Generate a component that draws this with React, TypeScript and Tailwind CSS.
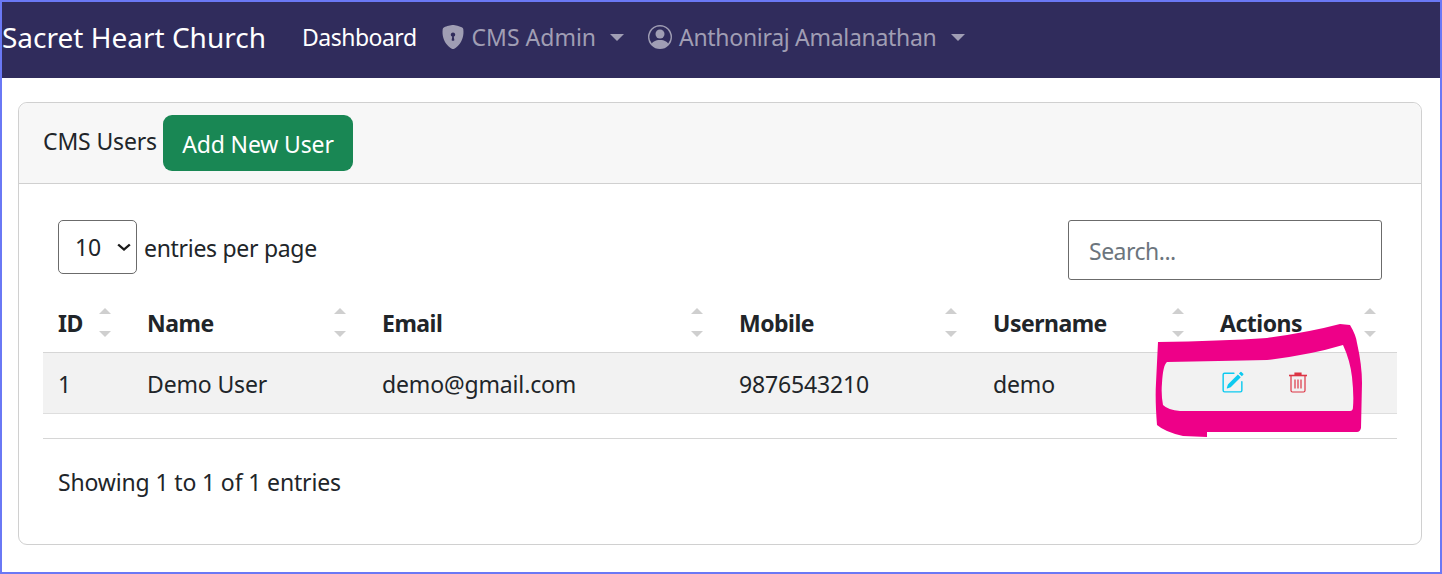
import { BsPencilSquare, BsPersonCircle, BsShieldLockFill } from "react-icons/bs";

const SortArrows = () => (
  <span className="absolute right-[21px] top-[13px] flex flex-col gap-[17px]">
    <span className="h-0 w-0 border-x-[6px] border-b-[6px] border-x-transparent border-b-[#cfcfcf]" />
    <span className="h-0 w-0 border-x-[6px] border-t-[6px] border-x-transparent border-t-[#cfcfcf]" />
  </span>
);

const Caret = () => (
  <span className="ml-[14px] h-0 w-0 border-x-[7px] border-t-[7px] border-x-transparent border-t-current" />
);

const TrashIcon = () => (
  <svg viewBox="0 0 20 22" className="h-[22px] w-[20px]" fill="none" stroke="#dc3545" strokeWidth="1.2">
    <path d="M1 4.5h18" strokeWidth="1.6" />
    <path d="M7 4V2h6v2" fill="#dc3545" />
    <path d="M3 5v14.5a1.5 1.5 0 0 0 1.5 1.5h11a1.5 1.5 0 0 0 1.5-1.5V5" />
    <path d="M7 8.5v9M10 8.5v9M13 8.5v9" />
  </svg>
);

const columns = [
  { label: "ID", width: "w-[89px]" },
  { label: "Name", width: "w-[235px]" },
  { label: "Email", width: "w-[357px]" },
  { label: "Mobile", width: "w-[254px]" },
  { label: "Username", width: "w-[227px]" },
  { label: "Actions", width: "w-[192px]" },
];

export default function App() {
  return (
    <div className="relative box-border h-[574px] w-[1442px] overflow-hidden border-2 border-[#6a78f5] bg-white font-['Noto_Sans',sans-serif] text-[23px] tracking-[-0.15px] text-[#212529]">
      <nav className="flex h-[76px] items-center bg-[#302c5c] pb-[6px]">
        <span className="text-[28px] tracking-normal text-white">Sacret Heart Church</span>
        <span className="ml-[36px] tracking-[-0.5px] text-white">Dashboard</span>
        <span className="ml-[24px] flex items-center tracking-normal text-[#a09eb4]">
          <BsShieldLockFill className="mr-[7px] h-[24px] w-[24px]" />
          CMS Admin
          <Caret />
        </span>
        <span className="ml-[24px] flex items-center tracking-[-0.3px] text-[#a09eb4]">
          <BsPersonCircle className="mr-[7px] h-[24px] w-[24px]" />
          Anthoniraj Amalanathan
          <Caret />
        </span>
      </nav>

      <div className="ml-[16px] mr-[18px] mt-[24px] h-[443px] rounded-[9px] border border-[#d0d0d0]">
        <div className="flex h-[81px] items-center rounded-t-[9px] border-b border-[#d0d0d0] bg-[#f7f7f7] pl-[24px]">
          <span className="-mt-[4px]">CMS Users</span>
          <button className="ml-[6px] h-[56px] w-[190px] rounded-[9px] bg-[#198754] pt-[2px] text-white">
            Add New User
          </button>
        </div>

        <div className="px-[24px]">
          <div className="mx-[15px] mt-[36px] flex items-start justify-between">
            <div className="flex items-center">
              <div className="relative">
                <select className="box-border block h-[54px] w-[79px] appearance-none rounded-[5px] border border-[#6b6b6b] bg-white pl-[16px]">
                  <option>10</option>
                </select>
                <svg
                  viewBox="0 0 12 8"
                  className="pointer-events-none absolute right-[6px] top-[23px] h-[8px] w-[14px]"
                  fill="none"
                  stroke="#1a1a1a"
                  strokeWidth="2"
                  preserveAspectRatio="none"
                >
                  <path d="M1 1.5l5 5 5-5" />
                </svg>
              </div>
              <span className="ml-[7px] mt-[2px] tracking-[-0.3px]">entries per page</span>
            </div>
            <input
              placeholder="Search..."
              className="box-border h-[60px] w-[314px] rounded-[3px] border border-[#6b6b6b] px-[20px] pt-[2px] tracking-[-0.5px] placeholder:text-[#6c757d]"
            />
          </div>

          <table className="mt-[15px] w-[1354px] table-fixed border-collapse">
            <thead>
              <tr className="h-[57px] border-b border-[#d6d6d6]">
                {columns.map((col) => (
                  <th key={col.label} className={`relative pl-[15px] text-left font-bold tracking-[-0.5px] ${col.width}`}>
                    {col.label}
                    <SortArrows />
                  </th>
                ))}
              </tr>
            </thead>
            <tbody>
              <tr className="h-[61px] border-b border-[#dedede] bg-[#f2f2f2]">
                <td className="pl-[15px] pt-[3px]">1</td>
                <td className="pl-[15px] pt-[3px]">Demo User</td>
                <td className="pl-[15px] pt-[3px]">demo@gmail.com</td>
                <td className="pl-[15px] pt-[3px]">9876543210</td>
                <td className="pl-[15px] pt-[3px]">demo</td>
                <td className="pl-[15px] pt-[3px]">
                  <div className="-mt-[4px] ml-[1px] flex items-center gap-[44px]">
                    <BsPencilSquare className="h-[23px] w-[23px] text-[#0dcaf0]" />
                    <TrashIcon />
                  </div>
                </td>
              </tr>
            </tbody>
          </table>

          <div className="mt-[24px] border-t border-[#d6d6d6] pl-[15px] pt-[26px]">Showing 1 to 1 of 1 entries</div>
        </div>
      </div>

      {/* hand drawn highlight over the action icons */}
      <svg className="pointer-events-none absolute left-[-2px] top-[-2px]" width="1442" height="574">
        <path
          fillRule="evenodd"
          fill="#ee0088"
          d="M1158 342Q1220 341 1267 338Q1310 332 1340 324L1350 325Q1356 335 1357 343Q1362 365 1362 383L1361 428Q1360 432 1357 432H1207V437L1183 436Q1165 432 1157 425Q1155 400 1156 383ZM1167 362Q1220 361 1267 360Q1310 355 1343 345Q1350 360 1352 377Q1354 395 1353 407Q1353 411 1350 411H1180Q1168 410 1163 405Q1161 395 1162 383Q1163 365 1167 362Z"
        />
      </svg>
    </div>
  );
}
